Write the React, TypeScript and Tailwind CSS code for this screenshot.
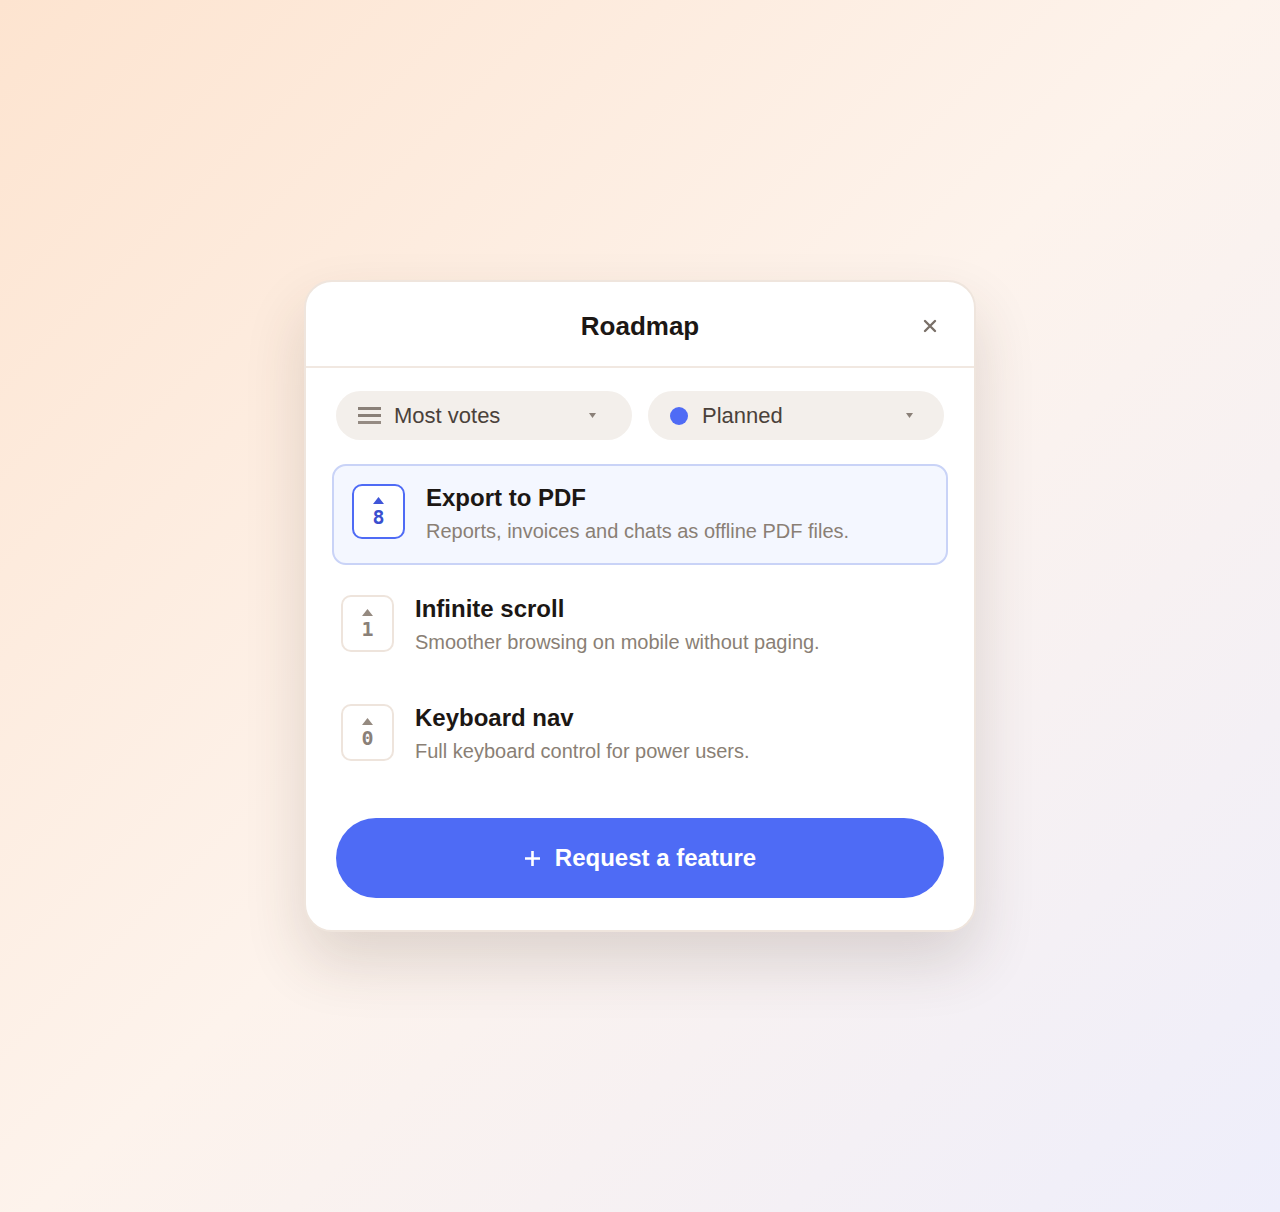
import React from 'react';

type Feature = {
  title: string;
  desc: string;
  votes: number;
  active?: boolean;
};

const features: Feature[] = [
  { title: 'Export to PDF', desc: 'Reports, invoices and chats as offline PDF files.', votes: 8, active: true },
  { title: 'Infinite scroll', desc: 'Smoother browsing on mobile without paging.', votes: 1 },
  { title: 'Keyboard nav', desc: 'Full keyboard control for power users.', votes: 0 },
];

function Caret() {
  return (
    <svg width="7" height="5" viewBox="0 0 7 5" className="fill-[#8a8078]">
      <path d="M0 0H7L3.5 5Z" />
    </svg>
  );
}

function VoteBox({ votes, active }: { votes: number; active?: boolean }) {
  return (
    <div
      className={
        active
          ? 'flex h-[55px] w-[53px] shrink-0 flex-col items-center justify-center rounded-[10px] border-2 border-[#4f6bf5] bg-white'
          : 'flex h-[57px] w-[53px] shrink-0 flex-col items-center justify-center rounded-[10px] border-2 border-[#eee4dc] bg-white'
      }
    >
      <svg width="11" height="7" viewBox="0 0 11 7" className={active ? 'fill-[#3f55d8]' : 'fill-[#958a80]'}>
        <path d="M5.5 0L11 7H0Z" />
      </svg>
      <span
        className={
          active
            ? 'mt-[3px] text-[20px] font-bold leading-[20px] text-[#3a4fcf]'
            : 'mt-[3px] text-[20px] font-bold leading-[20px] text-[#8a8078]'
        }
        style={{ fontFamily: '"DejaVu Sans Mono", "Liberation Mono", monospace' }}
      >
        {votes}
      </span>
    </div>
  );
}

export default function App() {
  return (
    <div
      className="flex min-h-[1212px] w-full items-center justify-center bg-[linear-gradient(135deg,#fde4d0_0%,#fdf3ec_50%,#eeeefb_100%)]"
      style={{ fontFamily: '"Liberation Sans", Arial, sans-serif' }}
    >
      <div className="w-[672px] overflow-hidden rounded-[28px] border-2 border-[#efe5dd] bg-white shadow-[0_30px_60px_rgba(70,50,40,0.16)]">
        {/* header */}
        <div className="relative flex h-[86px] items-center justify-center border-b-2 border-[#f1e8e1] pt-[5px]">
          <h1 className="text-[26px] font-bold text-[#1c1714]">Roadmap</h1>
          <button className="absolute right-[37px] top-[37px] flex h-[14px] w-[14px] items-center justify-center">
            <svg width="14" height="14" viewBox="0 0 14 14" className="stroke-[#7a7068]" strokeWidth="2.4" strokeLinecap="round">
              <path d="M2 2L12 12M12 2L2 12" />
            </svg>
          </button>
        </div>

        <div className="px-[30px] pb-[32px] pt-[23px]">
          {/* filters */}
          <div className="grid grid-cols-2 gap-4">
            <button className="flex h-[49px] items-center rounded-full bg-[#f3efeb] pl-[22px] pr-[36px] text-left">
              <span className="flex w-[23px] flex-col gap-[4px]">
                <span className="h-[3px] w-full bg-[#8a8078]" />
                <span className="h-[3px] w-full bg-[#8a8078]" />
                <span className="h-[3px] w-full bg-[#958b83]" />
              </span>
              <span className="ml-[13px] flex-1 text-[22px] text-[#4a413a]">Most votes</span>
              <Caret />
            </button>
            <button className="flex h-[49px] items-center rounded-full bg-[#f3efeb] pl-[22px] pr-[31px] text-left">
              <span className="h-[18px] w-[18px] rounded-full bg-[#4f6bf5]" />
              <span className="ml-[14px] flex-1 text-[22px] text-[#4a413a]">Planned</span>
              <Caret />
            </button>
          </div>

          {/* list */}
          <div className="-mx-1 mt-[24px] flex flex-col gap-[10px]">
            {features.map((f) => (
              <div
                key={f.title}
                className={
                  f.active
                    ? 'flex items-start gap-[21px] rounded-[14px] border-2 border-[#c9d3f7] bg-[#f4f7ff] px-[18px] pb-[18px] pt-[18px]'
                    : 'flex items-start gap-[21px] rounded-[14px] border-2 border-transparent px-[7px] pb-[16px] pt-[18px]'
                }
              >
                <VoteBox votes={f.votes} active={f.active} />
                <div className="flex flex-col">
                  <div className="text-[24px] font-bold leading-[28px] text-[#1c1714]">{f.title}</div>
                  <div className="mt-[5px] text-[20px] leading-[28px] text-[#8a7f75]">{f.desc}</div>
                </div>
              </div>
            ))}
          </div>

          <button className="mt-[35px] flex h-[80px] w-full items-center justify-center gap-[14px] rounded-full bg-[#4e6bf5] text-white">
            <svg width="17" height="17" viewBox="0 0 17 17" className="stroke-white" strokeWidth="2.6">
              <path d="M8.5 1V16M1 8.5H16" />
            </svg>
            <span className="text-[24px] font-bold">Request a feature</span>
          </button>
        </div>
      </div>
    </div>
  );
}
